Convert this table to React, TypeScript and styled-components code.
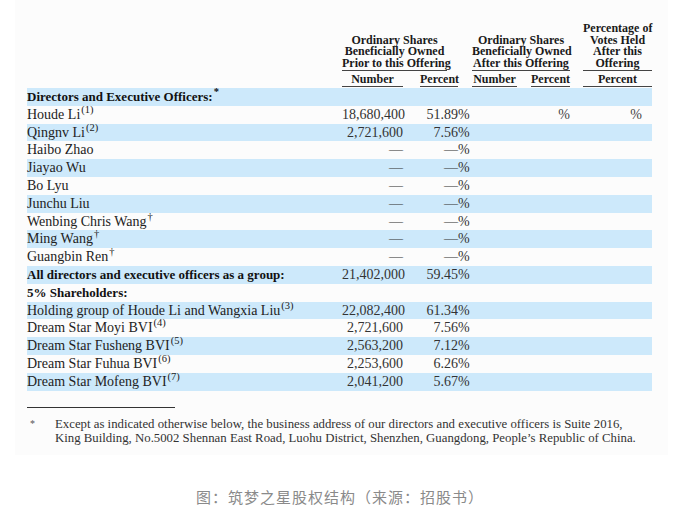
import React from "react";
import styled, { createGlobalStyle } from "styled-components";

const Global = createGlobalStyle`
  html, body { margin: 0; padding: 0; background: #ffffff; }
  body { font-family: "Liberation Serif", "Times New Roman", serif; }
`;

const COLS = "315px 63px 53px 12px 47px 54px 12px 69px";

const Page = styled.div`
  width: 680px;
  height: 514px;
  background: #ffffff;
  display: flex;
  flex-direction: column;
  align-items: stretch;
  font-family: "Liberation Serif", "Times New Roman", serif;
`;

const Panel = styled.div`
  margin: 0 12px 0 15px;
  padding: 23px 0 0 12px;
  height: 455px;
  background: #fcfcfc;
  box-sizing: border-box;
  display: flex;
  flex-direction: column;
`;

const HeaderGrid = styled.div`
  display: grid;
  grid-template-columns: ${COLS};
  width: 625px;
  font-weight: bold;
  font-size: 12px;
  color: #1a1a1a;
  white-space: nowrap;
`;

const GroupHead = styled.div<{ $col: string; $m: string }>`
  grid-column: ${(p) => p.$col};
  grid-row: 1;
  align-self: end;
  text-align: center;
  line-height: 11.5px;
  padding-bottom: 1px;
  border-bottom: 1px solid #444;
  margin: ${(p) => p.$m};
`;

const SubHead = styled.div<{ $col: string; $ml?: number; $mr?: number }>`
  grid-column: ${(p) => p.$col};
  grid-row: 2;
  text-align: center;
  line-height: 13px;
  padding-top: 2px;
  margin: 0 ${(p) => p.$mr ?? 0}px 0 ${(p) => p.$ml ?? 0}px;
  border-bottom: 1px solid #444;
`;

const Body = styled.div`
  margin-top: 1px;
  width: 625px;
  display: flex;
  flex-direction: column;
`;

const Row = styled.div<{ $shade: boolean }>`
  display: grid;
  grid-template-columns: ${COLS};
  height: 17.8px;
  line-height: 17.8px;
  font-size: 14px;
  color: #222;
  background: ${(p) => (p.$shade ? "#cde9fb" : "transparent")};
  white-space: nowrap;
`;

const Name = styled.div<{ $bold?: boolean }>`
  font-weight: ${(p) => (p.$bold ? "bold" : "normal")};
  font-size: ${(p) => (p.$bold ? "13px" : "14px")};
  color: ${(p) => (p.$bold ? "#111" : "#222")};
`;

const Num = styled.div`
  text-align: right;
  padding-right: 2px;
  color: #333;
`;

const Pct = styled.div`
  text-align: right;
  color: #333;
`;

const Sign = styled.div`
  text-align: left;
  color: #333;
`;

const AfterPct = styled.div`
  grid-column: 6;
  text-align: right;
  padding-right: 1px;
  color: #444;
`;

const VotePct = styled.div`
  grid-column: 8;
  text-align: right;
  padding-right: 10px;
  color: #444;
`;

const Sup = styled.sup`
  font-size: 10.5px;
  line-height: 0;
  vertical-align: 6px;
  margin-left: 1px;
`;

const Rule = styled.div`
  width: 148px;
  height: 1px;
  background: #333;
  margin-top: 16px;
`;

const Footnote = styled.div`
  display: grid;
  grid-template-columns: 25px 1fr;
  margin: 9px 0 0 3px;
  font-size: 12.8px;
  line-height: 14.5px;
  color: #333;
  white-space: nowrap;
`;

const Star = styled.div`
  font-size: 10px;
  color: #555;
`;

const Caption = styled.div`
  margin-top: 32px;
  text-align: center;
  font-family: "Noto Sans CJK SC", "Noto Sans", sans-serif;
  font-size: 15px;
  letter-spacing: 1px;
  color: #8a8a8a;
  line-height: 20px;
`;

type RowData = {
  name: React.ReactNode;
  bold?: boolean;
  num?: string;
  pct?: string;
  after?: boolean;
};

const rows: RowData[] = [
  { name: <>Directors and Executive Officers:<Sup>*</Sup></>, bold: true },
  { name: <>Houde Li<Sup>(1)</Sup></>, num: "18,680,400", pct: "51.89", after: true },
  { name: <>Qingnv Li<Sup>(2)</Sup></>, num: "2,721,600", pct: "7.56" },
  { name: "Haibo Zhao", num: "—", pct: "—" },
  { name: "Jiayao Wu", num: "—", pct: "—" },
  { name: "Bo Lyu", num: "—", pct: "—" },
  { name: "Junchu Liu", num: "—", pct: "—" },
  { name: <>Wenbing Chris Wang<Sup>†</Sup></>, num: "—", pct: "—" },
  { name: <>Ming Wang<Sup>†</Sup></>, num: "—", pct: "—" },
  { name: <>Guangbin Ren<Sup>†</Sup></>, num: "—", pct: "—" },
  { name: "All directors and executive officers as a group:", bold: true, num: "21,402,000", pct: "59.45" },
  { name: "5% Shareholders:", bold: true },
  { name: <>Holding group of Houde Li and Wangxia Liu<Sup>(3)</Sup></>, num: "22,082,400", pct: "61.34" },
  { name: <>Dream Star Moyi BVI<Sup>(4)</Sup></>, num: "2,721,600", pct: "7.56" },
  { name: <>Dream Star Fusheng BVI<Sup>(5)</Sup></>, num: "2,563,200", pct: "7.12" },
  { name: <>Dream Star Fuhua BVI<Sup>(6)</Sup></>, num: "2,253,600", pct: "6.26" },
  { name: <>Dream Star Mofeng BVI<Sup>(7)</Sup></>, num: "2,041,200", pct: "5.67" },
];

export default function App() {
  return (
    <Page>
      <Global />
      <Panel>
        <HeaderGrid>
          <GroupHead $col="2 / 4" $m="0 11px 0 0">
            Ordinary Shares
            <br />
            Beneficially Owned
            <br />
            Prior to this Offering
          </GroupHead>
          <GroupHead $col="5 / 7" $m="0 1px 0 2px">
            Ordinary Shares
            <br />
            Beneficially Owned
            <br />
            After this Offering
          </GroupHead>
          <GroupHead $col="8" $m="0">
            Percentage of
            <br />
            Votes Held
            <br />
            After this
            <br />
            Offering
          </GroupHead>
          <SubHead $col="2" $mr={2}>Number</SubHead>
          <SubHead $col="3" $ml={15}>Percent</SubHead>
          <SubHead $col="5" $ml={2}>Number</SubHead>
          <SubHead $col="6" $ml={14} $mr={1}>Percent</SubHead>
          <SubHead $col="8">Percent</SubHead>
        </HeaderGrid>
        <Body>
          {rows.map((r, i) => (
            <Row key={i} $shade={i % 2 === 0}>
              <Name $bold={r.bold}>{r.name}</Name>
              <Num>{r.num ?? ""}</Num>
              <Pct>{r.pct ?? ""}</Pct>
              <Sign>{r.pct ? "%" : ""}</Sign>
              {r.after && <AfterPct>%</AfterPct>}
              {r.after && <VotePct>%</VotePct>}
            </Row>
          ))}
        </Body>
        <Rule />
        <Footnote>
          <Star>*</Star>
          <div>
            Except as indicated otherwise below, the business address of our directors and executive officers is Suite 2016,
            <br />
            King Building, No.5002 Shennan East Road, Luohu District, Shenzhen, Guangdong, People’s Republic of China.
          </div>
        </Footnote>
      </Panel>
      <Caption>图：筑梦之星股权结构（来源：招股书）</Caption>
    </Page>
  );
}
